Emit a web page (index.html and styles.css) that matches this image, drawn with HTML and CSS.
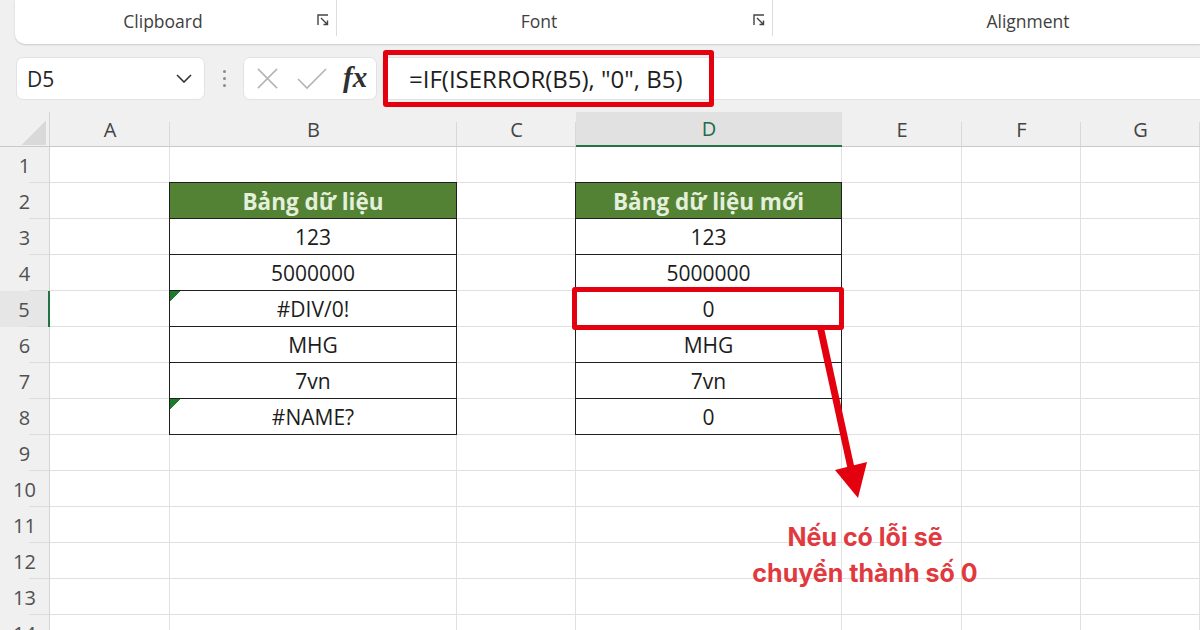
FILE: index.html
```html
<!DOCTYPE html>
<html lang="vi">
<head>
<meta charset="utf-8">
<title>IF ISERROR</title>
<link rel="stylesheet" href="styles.css">
</head>
<body>
<div class="app">
  <header class="ribbon">
    <div class="group group-clip">
      <span class="group-label">Clipboard</span>
      <svg class="launcher" viewBox="0 0 12 12"><path d="M1 11V1h10" /><path d="M4 4l6.5 6.5M6.5 10.5h4v-4" /></svg>
    </div>
    <div class="group group-font">
      <span class="group-label">Font</span>
      <svg class="launcher" viewBox="0 0 12 12"><path d="M1 11V1h10" /><path d="M4 4l6.5 6.5M6.5 10.5h4v-4" /></svg>
    </div>
    <div class="group group-align">
      <span class="group-label">Alignment</span>
    </div>
  </header>

  <div class="fbar">
    <div class="namebox">
      <span>D5</span>
      <svg class="chev" viewBox="0 0 16 9"><path d="M1 1l7 7 7-7" /></svg>
    </div>
    <div class="dots"><i></i><i></i><i></i></div>
    <div class="fxbox">
      <svg class="ico" viewBox="0 0 24 24"><path d="M2 2l20 20M22 2L2 22" /></svg>
      <svg class="ico ico-ok" viewBox="0 0 30 22"><path d="M1 11l9 9L29 1" /></svg>
      <span class="fx">fx</span>
    </div>
    <div class="finput">=IF(ISERROR(B5), "0", B5)</div>
  </div>

  <div class="sheet">
    <div class="corner"></div>
    <div class="ch">A</div><div class="ch">B</div><div class="ch">C</div><div class="ch sel">D</div><div class="ch">E</div><div class="ch">F</div><div class="ch">G</div>

    <div class="rh">1</div>
    <div class="c"></div><div class="c"></div><div class="c"></div><div class="c"></div><div class="c"></div><div class="c"></div><div class="c"></div>

    <div class="rh">2</div>
    <div class="c"></div><div class="c t th">Bảng dữ liệu</div><div class="c"></div><div class="c t th">Bảng dữ liệu mới</div><div class="c"></div><div class="c"></div><div class="c"></div>

    <div class="rh">3</div>
    <div class="c"></div><div class="c t">123</div><div class="c"></div><div class="c t">123</div><div class="c"></div><div class="c"></div><div class="c"></div>

    <div class="rh">4</div>
    <div class="c"></div><div class="c t">5000000</div><div class="c"></div><div class="c t">5000000</div><div class="c"></div><div class="c"></div><div class="c"></div>

    <div class="rh sel">5</div>
    <div class="c"></div><div class="c t err">#DIV/0!</div><div class="c"></div><div class="c t">0</div><div class="c"></div><div class="c"></div><div class="c"></div>

    <div class="rh">6</div>
    <div class="c"></div><div class="c t">MHG</div><div class="c"></div><div class="c t">MHG</div><div class="c"></div><div class="c"></div><div class="c"></div>

    <div class="rh">7</div>
    <div class="c"></div><div class="c t">7vn</div><div class="c"></div><div class="c t">7vn</div><div class="c"></div><div class="c"></div><div class="c"></div>

    <div class="rh">8</div>
    <div class="c"></div><div class="c t err">#NAME?</div><div class="c"></div><div class="c t">0</div><div class="c"></div><div class="c"></div><div class="c"></div>

    <div class="rh">9</div>
    <div class="c"></div><div class="c"></div><div class="c"></div><div class="c"></div><div class="c"></div><div class="c"></div><div class="c"></div>
    <div class="rh">10</div>
    <div class="c"></div><div class="c"></div><div class="c"></div><div class="c"></div><div class="c"></div><div class="c"></div><div class="c"></div>
    <div class="rh">11</div>
    <div class="c"></div><div class="c"></div><div class="c"></div><div class="c"></div><div class="c"></div><div class="c"></div><div class="c"></div>
    <div class="rh">12</div>
    <div class="c"></div><div class="c"></div><div class="c"></div><div class="c"></div><div class="c"></div><div class="c"></div><div class="c"></div>
    <div class="rh">13</div>
    <div class="c"></div><div class="c"></div><div class="c"></div><div class="c"></div><div class="c"></div><div class="c"></div><div class="c"></div>
    <div class="rh">14</div>
    <div class="c"></div><div class="c"></div><div class="c"></div><div class="c"></div><div class="c"></div><div class="c"></div><div class="c"></div>
  </div>

  <!-- callouts drawn on top of the sheet -->
  <div class="mark mark-formula"></div>
  <div class="mark mark-cell"></div>
  <svg class="arrow" viewBox="0 0 1200 630">
    <line x1="820" y1="326" x2="851" y2="468" />
    <polygon points="835,470 867,462 858,498" />
  </svg>
  <p class="note">Nếu có lỗi sẽ<br>chuyển thành số 0</p>
</div>
</body>
</html>
```

FILE: styles.css
```css
* { box-sizing: border-box; }

html, body {
  margin: 0;
  padding: 0;
}

body {
  width: 1200px;
  height: 630px;
  overflow: hidden;
  background: #f0f0f0;
  font-family: "Open Sans", "Noto Sans", sans-serif;
  color: #262626;
}

.app {
  position: relative;
  width: 1200px;
  height: 630px;
}

/* ---------- ribbon ---------- */
.ribbon {
  display: flex;
  height: 44px;
  margin-left: 15px;
  background: #fff;
  border-bottom-left-radius: 10px;
  box-shadow: 0 1px 2px rgba(0, 0, 0, 0.16);
}

.group {
  position: relative;
  display: flex;
  align-items: center;
  justify-content: center;
  height: 100%;
  padding-bottom: 2px;
  flex: none;
}

.group-clip { width: 322px; padding-right: 26px; }
.group-font { width: 436px; padding-right: 32px; }
.group-align { width: 510px; }

.group-clip::after,
.group-font::after {
  content: "";
  position: absolute;
  right: 0;
  top: 0;
  height: 36px;
  border-right: 1px solid #dcdcdc;
}

.group-label {
  font-size: 17.5px;
  color: #404040;
}

.launcher {
  position: absolute;
  right: 8px;
  top: 14px;
  width: 12px;
  height: 12px;
  fill: none;
  stroke: #444;
  stroke-width: 1.4;
}

/* ---------- formula bar ---------- */
.fbar {
  display: flex;
  align-items: center;
  height: 43px;
  margin-top: 13px;
  padding-left: 16px;
}

.namebox {
  display: flex;
  align-items: center;
  justify-content: space-between;
  width: 189px;
  height: 43px;
  padding: 0 12px 0 10px;
  background: #fff;
  border: 1px solid #e2e2e2;
  border-radius: 7px;
  font-size: 21px;
  color: #262626;
}

.chev {
  width: 16px;
  height: 9px;
  fill: none;
  stroke: #333;
  stroke-width: 1.6;
}

.dots {
  display: flex;
  flex-direction: column;
  align-items: center;
  gap: 4px;
  width: 38px;
}

.dots i {
  display: block;
  width: 3px;
  height: 3px;
  border-radius: 50%;
  background: #8a8a8a;
}

.fxbox {
  display: flex;
  align-items: center;
  width: 134px;
  height: 43px;
  padding-left: 12px;
  background: #fff;
  border: 1px solid #e2e2e2;
  border-radius: 7px;
}

.ico {
  width: 23px;
  height: 23px;
  fill: none;
  stroke: #b4b4b4;
  stroke-width: 1.6;
}

.ico-ok {
  width: 30px;
  height: 22px;
  margin-left: 18px;
}

.fx {
  margin-left: 16px;
  font-family: "Liberation Serif", serif;
  font-style: italic;
  font-weight: bold;
  font-size: 29px;
  color: #303030;
  line-height: 1;
  padding-bottom: 3px;
}

.finput {
  flex: 1;
  height: 43px;
  margin-left: 5px;
  padding-left: 26px;
  display: flex;
  align-items: center;
  background: #fff;
  border-top: 1px solid #e2e2e2;
  border-bottom: 1px solid #e2e2e2;
  border-left: 1px solid #e2e2e2;
  border-radius: 7px 0 0 7px;
  font-size: 24px;
  color: #1e1e1e;
}

/* ---------- sheet grid ---------- */
.sheet {
  display: grid;
  grid-template-columns: 50px 120px 287px 119px 266px 120px 119px 1fr;
  grid-template-rows: 35px repeat(14, 36px);
  margin-top: 12px;
}

.corner {
  background: #f0f0f0 linear-gradient(135deg, transparent 50%, #d9d9d9 50%) no-repeat 22px 9px / 24px 24px;
  border-right: 1px solid #d4d4d4;
  border-bottom: 1px solid #c9c9c9;
}

.ch {
  display: flex;
  align-items: center;
  justify-content: center;
  background: #f0f0f0 linear-gradient(#d9d9d9, #d9d9d9) no-repeat right bottom / 1px 24px;
  border-bottom: 1px solid #c9c9c9;
  font-size: 20px;
  color: #444;
}

.ch.sel {
  background: #e1e1e1;
  border-bottom: 2px solid #217346;
  color: #1e6b48;
}

.rh {
  display: flex;
  align-items: center;
  justify-content: center;
  background: #f0f0f0 linear-gradient(#dcdcdc, #dcdcdc) no-repeat right bottom / 20px 1px;
  border-right: 1px solid #d4d4d4;
  font-size: 20px;
  color: #505050;
}

.rh.sel {
  background-color: #e6e6e6;
  border-right: 2px solid #217346;
}

.c {
  display: flex;
  align-items: center;
  justify-content: center;
  background: #fff;
  border-right: 1px solid #e0e0e0;
  border-bottom: 1px solid #e0e0e0;
  font-size: 21px;
  color: #1c1c1c;
}

/* bordered table cells */
.t {
  border-right-color: #1f1f1f;
  border-bottom-color: #1f1f1f;
  box-shadow: -1px 0 0 #1f1f1f;
  padding-top: 1px;
}

.th {
  background: #548235;
  color: #e4f0dc;
  font-weight: bold;
  font-size: 22.5px;
  box-shadow: -1px 0 0 #1f1f1f, 0 -1px 0 #1f1f1f, -1px -1px 0 #1f1f1f;
}

/* green error-check marker in the top-left corner */
.err {
  background: #fff linear-gradient(135deg, #1e7b2e 0 7.5px, transparent 7.5px) no-repeat 0 0 / 14px 14px;
}

/* ---------- callouts ---------- */
.mark {
  position: absolute;
  border: 5px solid #e3000f;
  border-radius: 3px;
}

.mark-formula {
  left: 383px;
  top: 50px;
  width: 331px;
  height: 57px;
}

.mark-cell {
  left: 572px;
  top: 287px;
  width: 272px;
  height: 43px;
}

.arrow {
  position: absolute;
  left: 0;
  top: 0;
  width: 1200px;
  height: 630px;
  pointer-events: none;
}

.arrow line {
  stroke: #e3000f;
  stroke-width: 7;
  stroke-linecap: butt;
}

.arrow polygon {
  fill: #e3000f;
}

.note {
  position: absolute;
  left: 740px;
  top: 519px;
  width: 250px;
  margin: 0;
  text-align: center;
  font-family: Inter, "Noto Sans", sans-serif;
  font-weight: 700;
  font-size: 25px;
  line-height: 36px;
  color: #e0393e;
}
```
